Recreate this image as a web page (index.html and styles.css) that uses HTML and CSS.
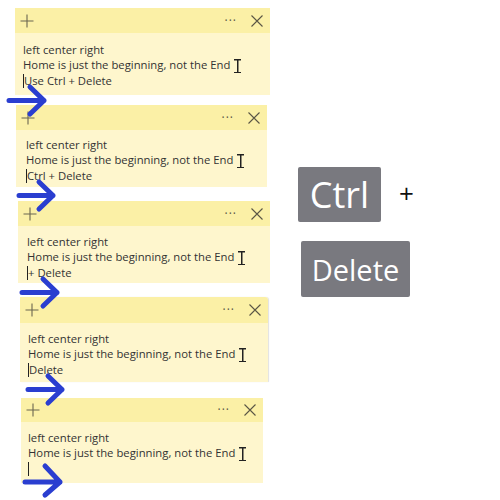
FILE: index.html
```html
<!DOCTYPE html>
<html>
<head>
<meta charset="utf-8">
<link rel="stylesheet" href="styles.css">
</head>
<body>
<div class="page">
  <div class="notes">
    <div class="note n1">
      <div class="nhead">
        <svg class="plus" width="14" height="14" viewBox="0 0 14 14"><path d="M7 0.5V13.5M0.5 7H13.5" stroke="#6b6650" stroke-width="1.1" fill="none"/></svg>
        <span class="grow"></span>
        <span class="dots">···</span>
        <svg class="close" width="12" height="12" viewBox="0 0 12 12"><path d="M0.5 0.5L11.5 11.5M11.5 0.5L0.5 11.5" stroke="#5a5645" stroke-width="1.1" fill="none"/></svg>
      </div>
      <div class="nbody">
        <div>left center right</div>
        <div>Home is just the beginning, not the End<span class="ibeam"></span></div>
        <div><span class="caret"></span>Use Ctrl + Delete</div>
      </div>
    </div>
    <div class="note n2">
      <div class="nhead">
        <svg class="plus" width="14" height="14" viewBox="0 0 14 14"><path d="M7 0.5V13.5M0.5 7H13.5" stroke="#6b6650" stroke-width="1.1" fill="none"/></svg>
        <span class="grow"></span>
        <span class="dots">···</span>
        <svg class="close" width="12" height="12" viewBox="0 0 12 12"><path d="M0.5 0.5L11.5 11.5M11.5 0.5L0.5 11.5" stroke="#5a5645" stroke-width="1.1" fill="none"/></svg>
      </div>
      <div class="nbody">
        <div>left center right</div>
        <div>Home is just the beginning, not the End<span class="ibeam"></span></div>
        <div><span class="caret"></span>Ctrl + Delete</div>
      </div>
    </div>
    <div class="note n3">
      <div class="nhead">
        <svg class="plus" width="14" height="14" viewBox="0 0 14 14"><path d="M7 0.5V13.5M0.5 7H13.5" stroke="#6b6650" stroke-width="1.1" fill="none"/></svg>
        <span class="grow"></span>
        <span class="dots">···</span>
        <svg class="close" width="12" height="12" viewBox="0 0 12 12"><path d="M0.5 0.5L11.5 11.5M11.5 0.5L0.5 11.5" stroke="#5a5645" stroke-width="1.1" fill="none"/></svg>
      </div>
      <div class="nbody">
        <div>left center right</div>
        <div>Home is just the beginning, not the End<span class="ibeam"></span></div>
        <div><span class="caret"></span>+ Delete</div>
      </div>
    </div>
    <div class="note n4">
      <div class="nhead">
        <svg class="plus" width="14" height="14" viewBox="0 0 14 14"><path d="M7 0.5V13.5M0.5 7H13.5" stroke="#6b6650" stroke-width="1.1" fill="none"/></svg>
        <span class="grow"></span>
        <span class="dots">···</span>
        <svg class="close" width="12" height="12" viewBox="0 0 12 12"><path d="M0.5 0.5L11.5 11.5M11.5 0.5L0.5 11.5" stroke="#5a5645" stroke-width="1.1" fill="none"/></svg>
      </div>
      <div class="nbody">
        <div>left center right</div>
        <div>Home is just the beginning, not the End<span class="ibeam"></span></div>
        <div><span class="caret"></span>Delete</div>
      </div>
    </div>
    <div class="note n5">
      <div class="nhead">
        <svg class="plus" width="14" height="14" viewBox="0 0 14 14"><path d="M7 0.5V13.5M0.5 7H13.5" stroke="#6b6650" stroke-width="1.1" fill="none"/></svg>
        <span class="grow"></span>
        <span class="dots">···</span>
        <svg class="close" width="12" height="12" viewBox="0 0 12 12"><path d="M0.5 0.5L11.5 11.5M11.5 0.5L0.5 11.5" stroke="#5a5645" stroke-width="1.1" fill="none"/></svg>
      </div>
      <div class="nbody">
        <div>left center right</div>
        <div>Home is just the beginning, not the End<span class="ibeam"></span></div>
        <div><span class="caret"></span></div>
      </div>
    </div>
    <svg class="arrows" width="80" height="500" viewBox="0 0 80 500">
      <g stroke="#2a3ed0" stroke-width="5" stroke-linecap="round" stroke-linejoin="round" fill="none">
        <path d="M9 100.5H44M30 87L44 100.5L30 114"/>
        <path d="M19 195.5H53M39 182L53 195.5L39 209"/>
        <path d="M22 292.5H57M43 279L57 292.5L43 306"/>
        <path d="M28 389.5H62M48 376L62 389.5L48 403"/>
        <path d="M25 482H60M45 466L60 482L45 495"/>
      </g>
    </svg>
  </div>
  <div class="keys">
    <div class="keyrow">
      <div class="key ctrl">Ctrl</div>
      <span class="plussign">+</span>
    </div>
    <div class="key del">Delete</div>
  </div>
</div>
</body>
</html>
```
FILE: styles.css
```css
html, body {
  margin: 0;
  padding: 0;
  background: #ffffff;
}
.page {
  display: flex;
  width: 500px;
  height: 500px;
  font-family: "Open Sans", "Noto Sans", sans-serif;
}
.notes {
  position: relative;
  width: 290px;
  display: flex;
  flex-direction: column;
  align-items: flex-start;
}
.note {
  display: flex;
  flex-direction: column;
}
.n1 { margin: 8px 0 0 15px; width: 255px; }
.n2 { margin: 10px 0 0 16px; width: 251px; }
.n3 { margin: 14px 0 0 18px; width: 252px; }
.n4 { margin: 14px 0 0 20px; width: 248px; border-radius: 0 3px 0 0; box-shadow: 1px 0 1px rgba(0,0,0,0.12); }
.n5 { margin: 16px 0 0 21px; width: 242px; }
.nhead {
  height: 25px;
  background: #fbf0a6;
  display: flex;
  align-items: center;
  padding: 0 7px 0 5px;
}
.n4 .nhead { height: 26px; border-radius: 0 3px 0 0; }
.n5 .nhead { height: 24px; }
.grow { flex: 1; }
.dots {
  font-size: 12px;
  color: #5a5645;
  letter-spacing: 1px;
  margin-right: 14px;
  line-height: 1;
}
.nbody {
  background: #fef6cd;
  padding: 9px 0 0 8px;
  font-size: 11.3px;
  line-height: 15px;
  color: #333333;
  box-sizing: border-box;
}
.n1 .nbody { height: 62px; padding-top: 9px; }
.n2 .nbody { height: 57px; padding-top: 7px; padding-left: 10px; }
.n3 .nbody { height: 57px; padding-top: 8px; padding-left: 9px; }
.n4 .nbody { height: 59px; padding-top: 8px; }
.n5 .nbody { height: 61px; padding-top: 8px; padding-left: 7px; }
.ibeam {
  display: inline-block;
  width: 7px;
  height: 14px;
  margin-left: 4px;
  vertical-align: -4px;
  background:
    linear-gradient(#222, #222) 3px 0 / 1.5px 14px no-repeat,
    linear-gradient(#222, #222) 0 0 / 7px 1.5px no-repeat,
    linear-gradient(#222, #222) 0 12.5px / 7px 1.5px no-repeat;
}
.caret {
  display: inline-block;
  width: 1px;
  height: 14px;
  background: #222;
  vertical-align: -3px;
}
.arrows {
  position: absolute;
  left: 0;
  top: 0;
}
.keys {
  display: flex;
  flex-direction: column;
  padding: 167px 0 0 8px;
  gap: 19px;
}
.keyrow {
  display: flex;
  align-items: center;
}
.key {
  background: #79797f;
  color: #ffffff;
  border-radius: 2px;
  display: flex;
  align-items: center;
  justify-content: center;
}
.ctrl {
  width: 83px;
  height: 55px;
  font-size: 36px;
}
.plussign {
  font-size: 26px;
  color: #111;
  margin-left: 18px;
  margin-top: -4px;
}
.del {
  width: 109px;
  height: 56px;
  font-size: 29px;
  margin-left: 3px;
}
```
